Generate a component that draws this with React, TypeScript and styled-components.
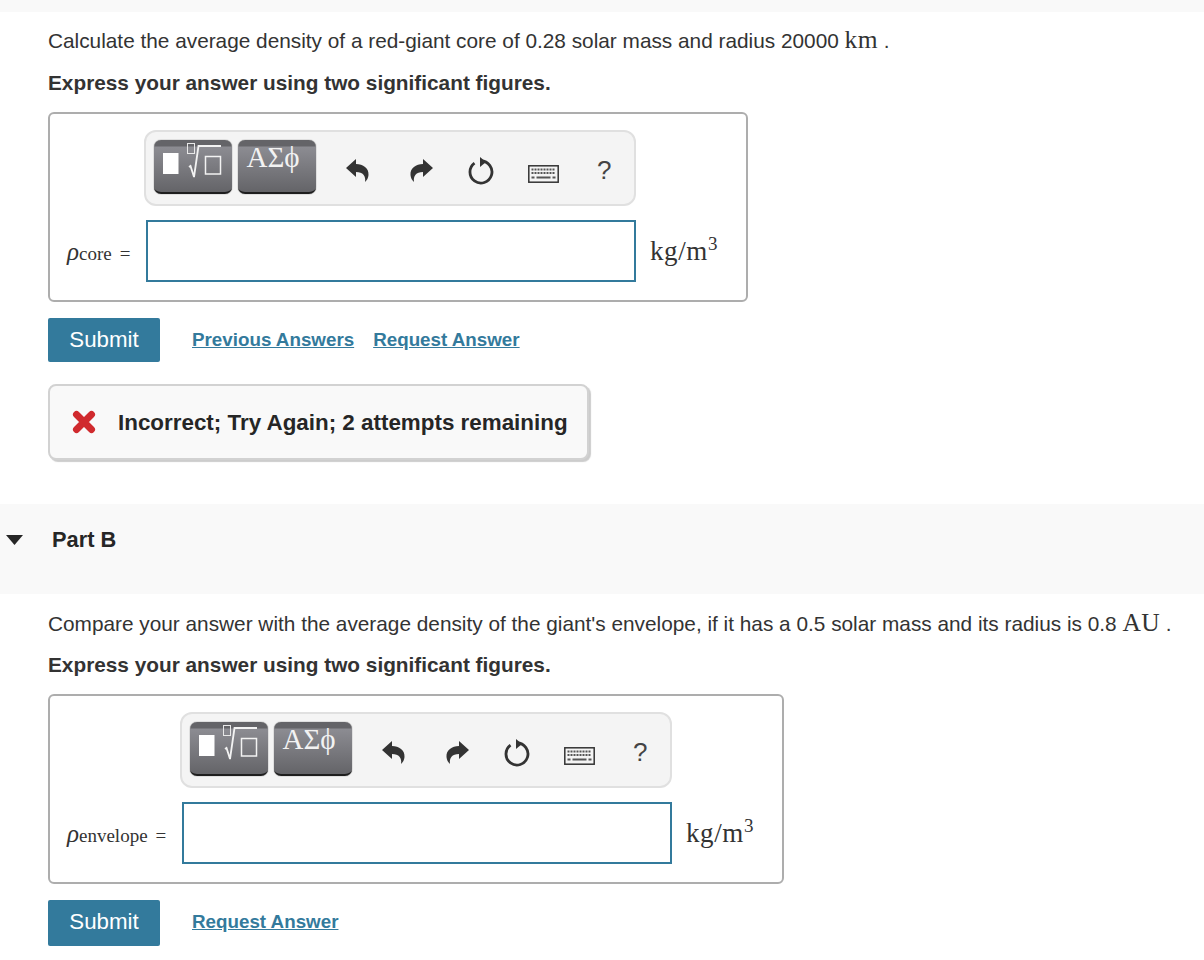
import styled, {createGlobalStyle} from "styled-components";

const GlobalStyle = createGlobalStyle`
    html, body {
        margin: 0;
        padding: 0;
        background: #fff;
    }
    body {
        font-family: "Liberation Sans", Arial, sans-serif;
        color: #333;
    }
    * {
        box-sizing: border-box;
    }
`

const Page = styled.div`
    width: 1204px;
    height: 960px;
    overflow: hidden;
`

const TopBand = styled.div`
    height: 12px;
    background: #f9f9f9;
`

const Section = styled.section<{top: number}>`
    padding: ${p => p.top}px 0 0 48px;
`

const Prompt = styled.p`
    margin: 0;
    height: 24px;
    font-size: 20.8px;
    line-height: 24px;
    white-space: nowrap;
    color: #333;
`

const MathUnit = styled.span`
    font-family: "Liberation Serif", serif;
    font-size: 25.5px;
    line-height: 24px;
    letter-spacing: .4px;
`

const Instruction = styled.p<{gap: number}>`
    margin: ${p => p.gap}px 0 0 0;
    height: 24px;
    font-size: 20.8px;
    line-height: 24px;
    font-weight: 700;
    color: #333;
`

const AnswerBox = styled.div<{width: number}>`
    margin-top: 17px;
    width: ${p => p.width}px;
    height: 190px;
    border: 2px solid #adadad;
    border-radius: 6px;
    padding: 16px 0 0 0;
    display: flex;
    flex-direction: column;
`

const Toolbar = styled.div<{left: number}>`
    margin-left: ${p => p.left}px;
    width: 492px;
    height: 76px;
    background: #f4f4f4;
    border: 2px solid #e0e0e0;
    border-radius: 12px;
    display: flex;
    align-items: flex-start;
    padding: 8px 0 0 8px;
    position: relative;
`

const TemplateButton = styled.div`
    width: 78px;
    height: 54px;
    margin-right: 6px;
    border-radius: 7px;
    background: linear-gradient(#646468 0, #646468 6px, #8c8c92 7px, #646468 100%);
    border-bottom: 2px solid #1e1e1e;
    box-shadow: 0 0 1px #222;
    color: #fff;
    flex: none;
`

const GreekLabel = styled.div`
    font-family: "Liberation Serif", serif;
    font-size: 29px;
    line-height: 30px;
    padding: 2px 8px 0 0;
    text-align: center;
    color: #f2f2f2;
`

const ToolIcon = styled.svg<{left: number; top: number}>`
    position: absolute;
    left: ${p => p.left}px;
    top: ${p => p.top}px;
`

const HelpMark = styled.span`
    position: absolute;
    left: 451px;
    top: 24px;
    font-size: 26px;
    line-height: 29px;
    color: #444;
`

const InputRow = styled.div`
    margin-top: 14px;
    height: 62px;
    display: flex;
    align-items: center;
`

const RhoLabel = styled.div<{width: number}>`
    width: ${p => p.width}px;
    padding: 2px 0 0 17px;
    display: flex;
    align-items: baseline;
    white-space: nowrap;
    font-family: "Liberation Serif", serif;
    color: #333;
    flex: none;
`

const Rho = styled.i`
    font-size: 25px;
`

const Sub = styled.span`
    font-size: 19px;
`

const Equals = styled.span`
    font-size: 19px;
    margin-left: 8px;
`

const AnswerInput = styled.div`
    width: 490px;
    height: 62px;
    border: 2px solid #337a9c;
    background: #fff;
    flex: none;
`

const UnitLabel = styled.div`
    margin: -1px 0 0 14px;
    font-family: "Liberation Serif", serif;
    font-size: 27px;
    line-height: 30px;
    letter-spacing: .6px;
    color: #333;
    white-space: nowrap;

    sup {
        font-size: 19px;
        line-height: 0;
    }
`

const ActionRow = styled.div`
    margin-top: 16px;
    display: flex;
    align-items: flex-start;
`

const SubmitButton = styled.button<{tall?: boolean}>`
    width: 112px;
    height: ${p => p.tall ? 46 : 44}px;
    border: 0;
    border-radius: 2px;
    background: #337a9c;
    color: #fff;
    font-family: "Liberation Sans", Arial, sans-serif;
    font-size: 22.3px;
    padding: 0 0 ${p => p.tall ? 2 : 0}px 0;
`

const ActionLink = styled.a`
    margin-left: 32px;
    font-size: 18.8px;
    line-height: 44px;
    font-weight: 700;
    color: #337a9c;
    text-decoration: underline;

    & + & {
        margin-left: 19px;
    }
`

const Feedback = styled.div`
    margin-top: 22px;
    width: 541px;
    height: 76px;
    background: #f9f9f9;
    border: 2px solid #d2d2d2;
    border-radius: 8px;
    box-shadow: 2px 2px 1px #ccc;
    display: flex;
    align-items: center;
    padding: 0 0 0 22px;
    font-size: 22.4px;
    font-weight: 700;
    color: #262626;
    white-space: nowrap;
`

const FeedbackText = styled.span`
    margin: 2px 0 0 22px;
`

const PartHeader = styled.div`
    margin-top: 44px;
    height: 90px;
    background: #f9f9f9;
    display: flex;
    align-items: center;
    padding: 0 0 18px 6px;
`

const Caret = styled.svg`
    flex: none;
`

const PartTitle = styled.h2`
    margin: 0 0 0 29px;
    font-size: 21.8px;
    line-height: 26px;
    font-weight: 700;
    color: #262626;
`

const UndoIcon = ({left, top, flip}: {left: number; top: number; flip?: boolean}) => (
    <ToolIcon left={left} top={top} width="23" height="24" viewBox="0 0 23 24" style={flip ? {transform: "scaleX(-1)"} : undefined}>
        <path d="M0 10 10 1V6C17 6 23 10 22.500 17 22.300 20 21 22 19 24 20 18 17 14 10 14V19Z" fill="#333" />
    </ToolIcon>
)

const ResetIcon = ({left, top}: {left: number; top: number}) => (
    <ToolIcon left={left} top={top} width="26" height="28" viewBox="0 0 26 28">
        <path d="M6.500 6.100A11 11 0 1 0 13 4" fill="none" stroke="#333" strokeWidth="2.800" />
        <path d="M12 0 18 5 12 10z" fill="#333" />
    </ToolIcon>
)

const KeyboardIcon = ({left, top}: {left: number; top: number}) => (
    <ToolIcon left={left} top={top} width="31" height="18" viewBox="0 0 31 18">
        <rect x=".8" y=".8" width="29.400" height="16.400" fill="#f4f4f4" stroke="#333" strokeWidth="1.500" />
        <path d="M3.500 4.500h24M3.500 8h24" stroke="#555" strokeWidth="2" strokeDasharray="2 1" />
        <path d="M3.500 12.500h3M8.500 12.500h14M24.500 12.500h3" stroke="#555" strokeWidth="2" />
    </ToolIcon>
)

const TemplateGlyph = () => (
    <svg width="78" height="50" viewBox="0 0 78 50">
        <rect x="9" y="13" width="15.500" height="21" fill="#fff" />
        <rect x="33.500" y="3.500" width="7" height="10" fill="none" stroke="#e8e8e8" />
        <path d="M35 27l1.500-1 3.500 11 4.500-31H67" fill="none" stroke="#f2f2f2" strokeWidth="1.800" />
        <rect x="51.500" y="16.500" width="15" height="17.500" fill="none" stroke="#f2f2f2" strokeWidth="1.500" />
    </svg>
)

const AnswerPanel = ({sub, rowLabel, width, left}: {sub: string; rowLabel: number; width: number; left: number}) => (
    <AnswerBox width={width}>
        <Toolbar left={left}>
            <TemplateButton><TemplateGlyph /></TemplateButton>
            <TemplateButton><GreekLabel>ΑΣϕ</GreekLabel></TemplateButton>
            <UndoIcon left={200} top={26} />
            <UndoIcon left={264} top={26} flip />
            <ResetIcon left={322} top={25} />
            <KeyboardIcon left={382} top={33} />
            <HelpMark>?</HelpMark>
        </Toolbar>
        <InputRow>
            <RhoLabel width={rowLabel}>
                <Rho>ρ</Rho><Sub>{sub}</Sub><Equals>=</Equals>
            </RhoLabel>
            <AnswerInput />
            <UnitLabel>kg/m<sup>3</sup></UnitLabel>
        </InputRow>
    </AnswerBox>
)

export default function App() {
    return (
        <Page>
            <GlobalStyle />
            <TopBand />
            <Section top={16}>
                <Prompt>Calculate the average density of a red-giant core of 0.28 solar mass and radius 20000 <MathUnit>km</MathUnit> .</Prompt>
                <Instruction gap={19}>Express your answer using two significant figures.</Instruction>
                <AnswerPanel sub="core" rowLabel={96} width={700} left={94} />
                <ActionRow>
                    <SubmitButton>Submit</SubmitButton>
                    <ActionLink>Previous Answers</ActionLink>
                    <ActionLink>Request Answer</ActionLink>
                </ActionRow>
                <Feedback>
                    <svg width="24" height="24" viewBox="0 0 24 24">
                        <path d="M4.500 4.500 19.500 19.500M19.500 4.500 4.500 19.500" fill="none" stroke="#d02a2e" strokeWidth="7" strokeLinecap="round" />
                    </svg>
                    <FeedbackText>Incorrect; Try Again; 2 attempts remaining</FeedbackText>
                </Feedback>
            </Section>
            <PartHeader>
                <Caret width="17" height="10" viewBox="0 0 17 10"><path d="M0 0h17L8.500 10z" fill="#262626" /></Caret>
                <PartTitle>Part B</PartTitle>
            </PartHeader>
            <Section top={17}>
                <Prompt>Compare your answer with the average density of the giant's envelope, if it has a 0.5 solar mass and its radius is 0.8 <MathUnit>AU</MathUnit> .</Prompt>
                <Instruction gap={18}>Express your answer using two significant figures.</Instruction>
                <AnswerPanel sub="envelope" rowLabel={132} width={736} left={130} />
                <ActionRow>
                    <SubmitButton tall>Submit</SubmitButton>
                    <ActionLink>Request Answer</ActionLink>
                </ActionRow>
            </Section>
        </Page>
    );
}
